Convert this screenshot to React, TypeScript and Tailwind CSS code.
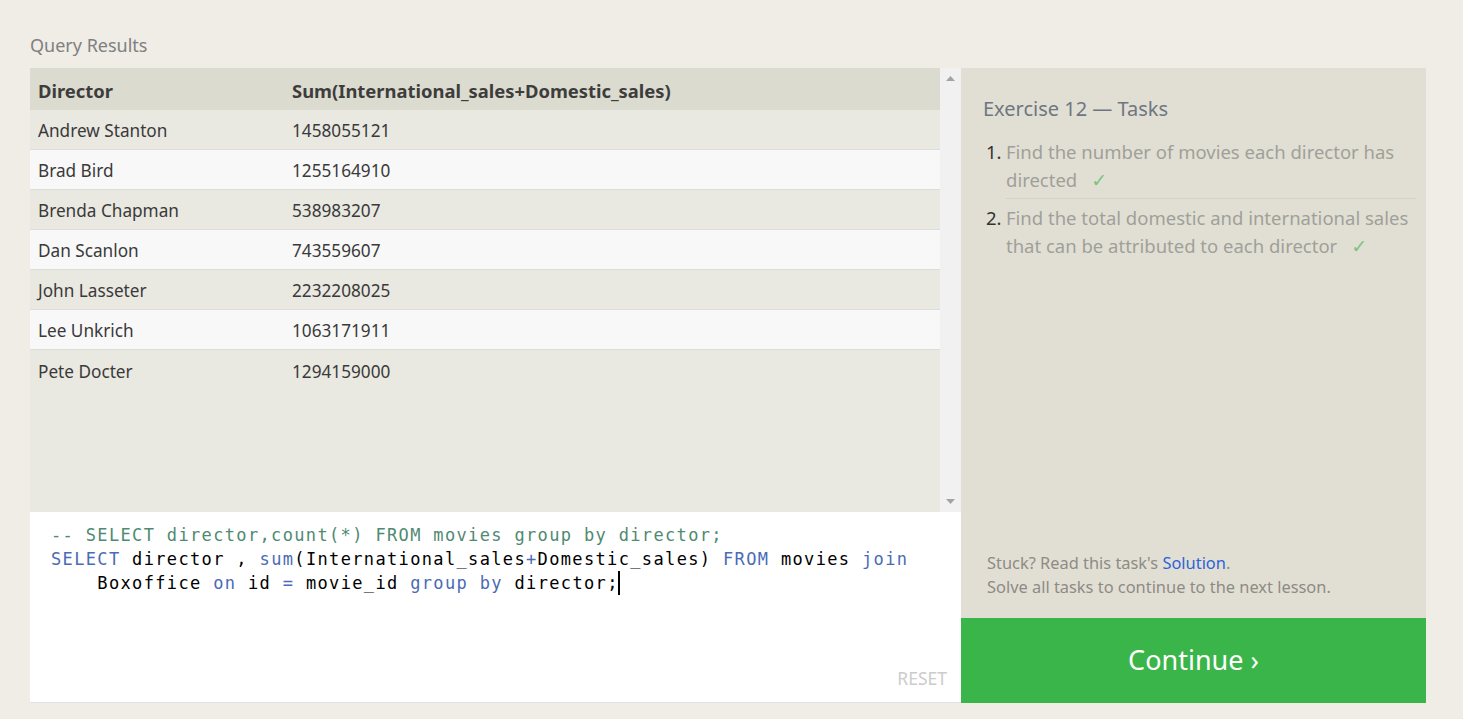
import { Fragment } from 'react'

const rows: [string, string][] = [
  ['Andrew Stanton', '1458055121'],
  ['Brad Bird', '1255164910'],
  ['Brenda Chapman', '538983207'],
  ['Dan Scanlon', '743559607'],
  ['John Lasseter', '2232208025'],
  ['Lee Unkrich', '1063171911'],
  ['Pete Docter', '1294159000'],
]

const kw = 'text-[#4a6bb5]'

export default function App() {
  return (
    <div className="min-h-[719px] w-full bg-[#efede6] pl-[30px] pt-[32px] font-['Noto_Sans',sans-serif]">
      <h2 className="text-[18px] leading-[26px] text-[#808080]">Query Results</h2>

      <div className="mt-[10px] flex">
        {/* left: results + editor */}
        <div className="flex w-[931px] flex-col">
          <div className="flex h-[444px] bg-[#e9e8e1]">
            <div className="flex-1">
              <div className="flex h-[42px] items-center bg-[#dcdbcf] pt-[3px] text-[18.4px] font-bold text-[#3d3d3d]">
                <div className="w-[262px] pl-[8px]">Director</div>
                <div>Sum(International_sales+Domestic_sales)</div>
              </div>
              {rows.map(([name, total], i) => (
                <div
                  key={name}
                  className={`flex h-[40px] items-center pt-[3px] text-[17.2px] text-[#3a3a3a] ${i % 2 ? 'bg-[#f8f8f8]' : 'bg-[#e9e8e1]'} ${i < rows.length - 1 ? 'border-b border-[#dddddd]' : ''}`}
                >
                  <div className="w-[262px] pl-[8px]">{name}</div>
                  <div>{total}</div>
                </div>
              ))}
            </div>
            {/* scrollbar */}
            <div className="flex w-[21px] flex-col items-center justify-between bg-[#f1f1f1] py-[8px]">
              <svg width="9" height="5" viewBox="0 0 9 5"><path d="M0 5 L4.5 0 L9 5 Z" fill="#a3a3a3" /></svg>
              <svg width="9" height="5" viewBox="0 0 9 5"><path d="M0 0 L4.5 5 L9 0 Z" fill="#a3a3a3" /></svg>
            </div>
          </div>

          <div className="relative h-[191px] border-b border-[#e2e2e2] bg-white pl-[21px] pt-[11px] font-['DejaVu_Sans_Mono',monospace] text-[17px] leading-[24px] tracking-[1.35px] whitespace-pre">
            <div className="text-[#4f8a72]">-- SELECT director,count(*) FROM movies group by director;</div>
            <div className="text-black">
              <span className={kw}>SELECT</span> director , <span className={kw}>sum</span>(International_sales<span className={kw}>+</span>Domestic_sales) <span className={kw}>FROM</span> movies <span className={kw}>join</span>
            </div>
            <div className="text-black">
              {'    '}Boxoffice <span className={kw}>on</span> id <span className={kw}>=</span> movie_id <span className={kw}>group</span> <span className={kw}>by</span> director;
              <span className="relative">
                <span className="absolute left-[-1px] top-[-2px] h-[24px] w-[2px] bg-black" />
              </span>
            </div>
            <div className="absolute bottom-[12px] right-[14px] font-['Noto_Sans',sans-serif] text-[17.5px] tracking-normal text-[#cccccc]">RESET</div>
          </div>
        </div>

        {/* right: tasks */}
        <div className="flex h-[635px] w-[465px] flex-col bg-[#e1dfd4]">
          <div className="flex-1 pl-[22px] pr-[8px] pt-[27px]">
            <h3 className="text-[20px] leading-[28px] text-[#6f7680]">Exercise 12 — Tasks</h3>
            <ol className="mt-[15px] text-[18.5px] leading-[28px] text-[#a09f99]">
              {[
                'Find the number of movies each director has directed',
                'Find the total domestic and international sales that can be attributed to each director',
              ].map((t, i) => (
                <Fragment key={i}>
                  <li className={`flex pl-[3px] ${i === 0 ? 'pb-[4px]' : 'pt-[5px]'}`}>
                    <span className="w-[20px] shrink-0 text-[#333333]">{i + 1}.</span>
                    <span>
                      {t}
                      <span className="ml-[14px] inline-block font-['DejaVu_Sans',sans-serif] text-[19px] leading-[20px] text-[#7cc47f]">✓</span>
                    </span>
                  </li>
                  {i === 0 && <li className="ml-[23px] mr-[2px] border-t border-[#d3d1c5]" />}
                </Fragment>
              ))}
            </ol>
          </div>
          <div className="px-[26px] pb-[19px] text-[16.4px] leading-[24px] text-[#8e8b85]">
            <p>
              Stuck? Read this task's <span className="text-[#2d63d8]">Solution</span>.
            </p>
            <p>Solve all tasks to continue to the next lesson.</p>
          </div>
          <div className="flex h-[85px] items-center justify-center bg-[#3ab54a] text-[27px] text-white">
            Continue ›
          </div>
        </div>
      </div>
    </div>
  )
}
